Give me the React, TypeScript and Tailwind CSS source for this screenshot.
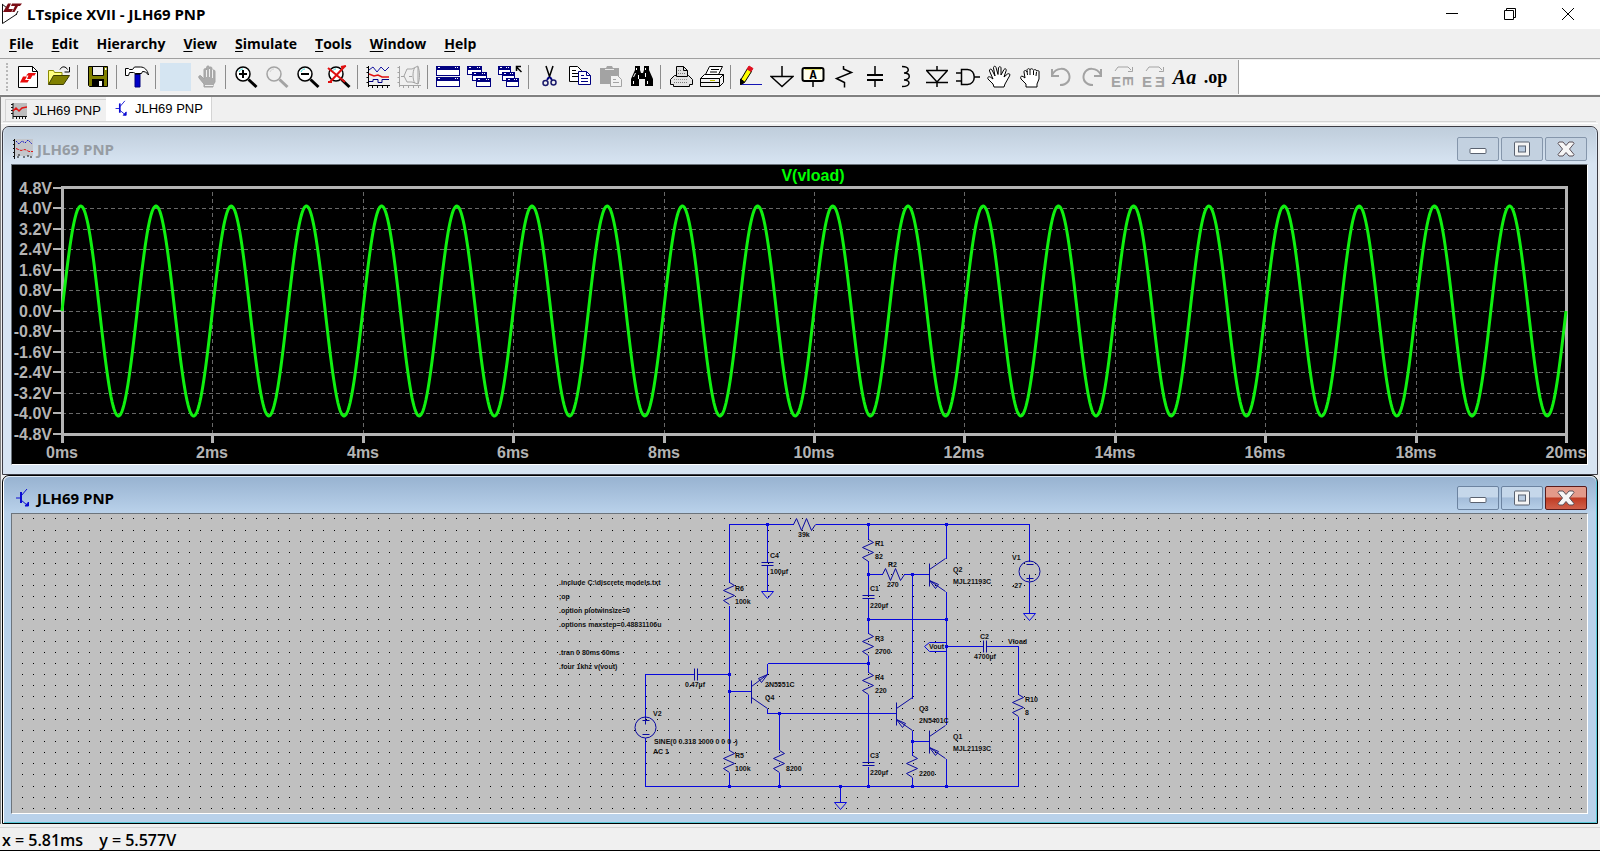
import React from 'react';

const BLUE = '#0808dc';
const GREY = '#a3a3a3';
const AXIS = '#b4b4b4';

/* ---------- toolbar icons, all on a 24x24 grid ---------- */

const Icon: React.FC<{ children: React.ReactNode }> = ({ children }) => (
  <svg width="24" height="24" viewBox="0 0 24 24" fill="none" stroke="#000" aria-hidden="true">
    {children}
  </svg>
);

const NewIcon = () => (
  <Icon>
    <path d="M2.500 1.500h14l5 5v16h-19z" fill="#fff" />
    <path d="M16.500 1.500v5h5" />
    <path d="M4 17.500l3-6h4l-2 3.500h4l-1.500 2.500zM11 14l1.500-3.500H10L12.500 8H20l-1.500 2.500h-2L14.500 14z" fill="#e80c0c" stroke="none" />
  </Icon>
);

const OpenIcon = () => (
  <Icon>
    <path d="M1.500 19V5.500h5l1 2h7.500v4" fill="#ffff80" stroke="#8a8a00" />
    <path d="M1.500 19.500l5-9h16l-6 9z" fill="#808000" stroke="#3c3c00" />
    <path d="M13 4.500c2-4 6-3 7.500 0M22.500 2v5h-5" stroke="#000" />
  </Icon>
);

const SaveIcon = () => (
  <Icon>
    <path d="M2.500 1.500h19v20h-18l-1-1z" fill="#808000" />
    <path d="M6.500 1.500h11v9h-11z" fill="#f0f0f0" />
    <path d="M6 14h12v8H6z" fill="#000" stroke="none" />
    <path d="M13 16h3v5h-3z" fill="#fff" stroke="none" />
    <path d="M19 3h1.500v2H19z" fill="#fff" stroke="none" />
  </Icon>
);

const HammerIcon = () => (
  <Icon>
    <path d="M10 9h5v13h-5z" fill="#0000c8" stroke="#00007c" />
    <path d="M.5 3.500h3l1 1h3l2-2.500h6c4 0 7 3 8 8-2-3-4-3.500-6-3.500l-1 2h-6l-2-1h-4l-1 3h-3z" fill="#fff" />
    <path d="M10 9h5" stroke="#000" />
  </Icon>
);

const StopHandIcon = () => (
  <Icon>
    <path
      d="M9 22v-3l-5-6c-1-2 1-3 2-2l3 3V5c0-2 2.500-2 2.500 0v6V2.500c0-2 3-2 3 0V11V3.500c0-2 2.500-2 2.500 0V12V6.500c0-2 3-2 3 0V17l-2 3v2z"
      fill="#ababab"
      stroke={GREY}
    />
    <path d="M11.500 5v7M14.500 4v8M17.500 5v8M10 20.500h8" stroke="#efefef" />
  </Icon>
);

const Magnifier: React.FC<{ grey?: boolean; children?: React.ReactNode }> = ({ grey, children }) => (
  <Icon>
    <circle cx="9" cy="9" r="7" fill={grey ? '#f0f0f0' : '#fff'} stroke={grey ? GREY : '#000'} strokeWidth="1.500" />
    <path d="M5 7c1-2 2-3 4-3" stroke={grey ? '#d0d0d0' : '#40d8d8'} />
    <path d="M14.500 14.500l8 7.500" stroke={grey ? GREY : '#000'} strokeWidth="3" />
    {children}
  </Icon>
);

const ZoomInIcon = () => (
  <Magnifier>
    <path d="M9 5v8M5 9h8" strokeWidth="2" />
  </Magnifier>
);

const ZoomAreaIcon = () => <Magnifier grey />;

const ZoomOutIcon = () => (
  <Magnifier>
    <path d="M5 9h8" strokeWidth="2" />
  </Magnifier>
);

const ZoomFitIcon = () => (
  <Magnifier>
    <path d="M1 3l17 14M18 1L3 17M1 17h4M14 2l5-1" stroke="#e01010" strokeWidth="2" />
  </Magnifier>
);

const PlotIcon = () => (
  <Icon>
    <path d="M2.500 1v21M.5 2.500h2M.5 7.500h2M.5 12.500h2M.5 17.500h2M2 20.500h22M6.500 20v3M11.500 20v3M16.500 20v3M21.500 20v3" />
    <path d="M3 5l4-3 4 5 4-5 4 4 4-4" stroke="#1414a0" />
    <path d="M3 9l5 2 4-1 4 2h7" stroke="#e01010" strokeWidth="1.500" />
    <path d="M3 16.500h4v-2h5v3h4v-3h7" stroke="#000080" />
  </Icon>
);

const GreyPlotIcon = () => (
  <Icon>
    <g stroke={GREY}>
      <path d="M2.500 1v21M.5 2.500h2M.5 7.500h2M.5 12.500h2M.5 17.500h2M2 20.500h22M6.500 20v3M11.500 20v3M16.500 20v3M21.500 20v3" />
      <path d="M7 11l3-7h5l6-3v18l-6-2h-5z" />
      <path d="M17.500 3c-2 4-2 10 0 15M21 2c2 4 2 12 0 17" />
      <path d="M4 11.500h3M12 11.500h3" />
    </g>
  </Icon>
);

const TileIcon = () => (
  <Icon>
    <g shapeRendering="crispEdges" stroke="#000080">
      <path d="M.5 1.500h23v9H.5zM.5 12.500h23v9H.5z" fill="#fff" />
      <path d="M.5 3h23M.5 14h23" strokeWidth="4" />
      <path d="M2 2.500h2M19 2.500h1M21 2.500h1M2 13.500h2M19 13.500h1M21 13.500h1" stroke="#fff" />
    </g>
  </Icon>
);

const MiniWindow: React.FC<{ x: number; y: number; w: number }> = ({ x, y, w }) => (
  <g shapeRendering="crispEdges">
    <rect x={x + 0.5} y={y + 0.5} width={w} height="8" fill="#fff" stroke="#000080" />
    <rect x={x} y={y} width={w + 1} height="4" fill="#000080" stroke="none" />
    <path d={`M${x + 2} ${y + 1.5}h2M${x + w - 4} ${y + 1.5}h1M${x + w - 2} ${y + 1.5}h1`} stroke="#fff" />
  </g>
);

const CascadeIcon = () => (
  <Icon>
    <MiniWindow x={0} y={1} w={14} />
    <MiniWindow x={5} y={7} w={14} />
    <MiniWindow x={9} y={13} w={14} />
  </Icon>
);

const CloseAllIcon = () => (
  <Icon>
    <MiniWindow x={0} y={1} w={12} />
    <MiniWindow x={4} y={7} w={12} />
    <MiniWindow x={8} y={13} w={12} />
    <path d="M23.500 7l-5-5M18.500 6V1.500H23" strokeWidth="1.500" />
  </Icon>
);

const CutIcon = () => (
  <Icon>
    <path d="M9 1l4 12M16 1l-4 12" strokeWidth="1.500" />
    <path d="M12 12l-2 3M13 12l2 3" stroke="#000080" strokeWidth="2" />
    <circle cx="8.500" cy="18" r="2.500" stroke="#1a1a6c" strokeWidth="1.500" />
    <circle cx="16.500" cy="17.500" r="2.500" stroke="#1a1a6c" strokeWidth="1.500" />
  </Icon>
);

const CopyIcon = () => (
  <Icon>
    <path d="M1.500 1.500h8l4 4v11h-12z" fill="#fff" />
    <path d="M4 5.500h4M4 8.500h6M4 11.500h6" />
    <path d="M10.500 6.500h8l4 4v9h-12z" fill="#fff" stroke="#000080" />
    <path d="M18.500 6.500v4h4M13 10.500h3M13 13.500h7M13 16.500h7" stroke="#000080" />
  </Icon>
);

const PasteIcon = () => (
  <Icon>
    <path d="M1 3h6l1-2h5l1 2h6v16H1z" fill={GREY} stroke="none" />
    <path d="M6 4.500h9" stroke="#e8e8e8" />
    <path d="M11.500 10.500h7l4 4v7h-11z" fill="#f2f2f2" stroke={GREY} />
    <path d="M14 14.500h3M14 17.500h6" stroke={GREY} />
  </Icon>
);

const FindIcon = () => (
  <Icon>
    <path d="M5 1h5v4l1 3h2l1-3V1h5v4l4 9v7h-8v-7h-6v7H1v-7l4-9z" fill="#000" stroke="none" />
    <path d="M6.500 3v2M15.500 3v2M5.500 8l-2 4M15.500 8v4M8.500 10v4M3.500 16v3M17.500 16v3" stroke="#fff" />
  </Icon>
);

const PreviewIcon = () => (
  <Icon>
    <path d="M1.500 14.500l4-4h14l4 4v5h-3v2h-16v-2h-3z" fill="#e4e4e4" />
    <path d="M7.500 11.500v-10h7l4 4v6z" fill="#dedede" />
    <path d="M14.500 1.500v4h4" />
    <path d="M5 17.500h14M9 5.500h4M9 8.500h7" stroke="#777" strokeDasharray="1 1" />
    <path d="M5 14.500h14" stroke="#999" strokeDasharray="1 1" />
  </Icon>
);

const PrintIcon = () => (
  <Icon>
    <path d="M5.500 9.500l4-8h13l-4 8z" fill="#fff" />
    <path d="M11 4.500h8M10 7h7" />
    <path d="M.5 13.500l4-4h19l-4 4z" fill="#fff" />
    <path d="M.5 13.500h19v8H.5zM19.500 13.500l4-4v8l-4 4" fill="#f2f2f2" />
    <path d="M1 17.500h18" />
    <path d="M10 15.500h5" stroke="#c8c800" />
  </Icon>
);

const WireIcon = () => (
  <Icon>
    <path d="M2 19.500h21" stroke="#1414b4" />
    <path d="M8.500 3.500l4 3-7 11-4 2 .5-5z" fill="#ffff00" />
    <path d="M8 4l2-3 4 2.500-2 3z" fill="#e01020" stroke="#e01020" />
    <path d="M1.500 14l4 3-4 2.500z" fill="#000" />
  </Icon>
);

const GroundIcon = () => (
  <Icon>
    <path d="M12 1v10.500M1 11.500h22l-11 10z" strokeWidth="1.500" />
  </Icon>
);

const LabelIcon = () => (
  <Icon>
    <path d="M12 16v6" strokeWidth="1.500" />
    <rect x="1.500" y="3" width="21" height="13" rx="2" fill="#fffff0" strokeWidth="2" />
    <path d="M4 4.500h16" stroke="#dede60" />
    <text x="12" y="14" textAnchor="middle" fontSize="12" fontWeight="bold" fill="#000" stroke="none" fontFamily="Liberation Mono, monospace">A</text>
  </Icon>
);

const ResistorIcon = () => (
  <Icon>
    <path d="M11.500 1v3l8 3.500-15 6 8 4v5" strokeWidth="1.500" />
  </Icon>
);

const CapacitorIcon = () => (
  <Icon>
    <path d="M12 1v8M12 15v7" strokeWidth="1.500" />
    <path d="M4 10h16M4 15h16" strokeWidth="2" />
  </Icon>
);

const InductorIcon = () => (
  <Icon>
    <path d="M8 1.500c8 0 8 6 2 6.500 7 0 7 6.500 0 7 7 0 7 6.500-2 6.500" strokeWidth="1.500" />
  </Icon>
);

const DiodeIcon = () => (
  <Icon>
    <path d="M12 1v4M12 17v5M1 5.500h22M1 17.500h22M2 6l10 11L22 6" strokeWidth="1.500" />
  </Icon>
);

const GateIcon = () => (
  <Icon>
    <path d="M5.500 4.500h6c9 0 9 15 0 15h-6zM0 8h6M0 16h6M18.500 12H24" strokeWidth="1.500" />
  </Icon>
);

const MoveIcon = () => (
  <Icon>
    <path
      d="M7 22l-1-3-5-5c-1-2 1-3 3-1.500l2 1.500L2.500 6c-.5-2 1.500-2.500 2.500-1l3 6L6.500 3c0-2 2-2.500 2.500-.5l2 7 .5-6.500c.5-2 2.500-1.500 2.500 0v7l3-5.500c1-1.500 3-.5 2 1.500l-2 6 3.500-3c2-1 3 .5 2 2L18 19l-1 3z"
      fill="#fff"
    />
  </Icon>
);

const DragIcon = () => (
  <Icon>
    <path
      d="M8 22v-3l-5-5c-1-2 0-3.500 2-2.500l2 1.500-1-6c0-2 2-2 3 0V5c.5-2 3-1.500 3 0 .5-2 3-1.500 3.500.5 1-1.500 3-1 3 .5 2-1 3 0 2.500 2v6l-2 5v3z"
      fill="#fff"
    />
    <path d="M9 6l.5 4M12 5v5M15.500 6v4M18.500 7l-.5 4" />
  </Icon>
);

const UndoIcon = () => (
  <Icon>
    <path d="M3 4v7h7M3 10c4-8 14-8 17-1 2 6-2 11-9 11" stroke={GREY} strokeWidth="2" />
  </Icon>
);

const RedoIcon = () => (
  <Icon>
    <path d="M21 4v7h-7M21 10c-4-8-14-8-17-1-2 6 2 11 9 11" stroke={GREY} strokeWidth="2" />
  </Icon>
);

const RotateIcon = () => (
  <Icon>
    <path d="M4 6l3-4h10l3 3M21.500 2v4.500H17" stroke={GREY} />
    <g fill={GREY} stroke="none" fontSize="15" fontWeight="bold" fontFamily="Liberation Sans, sans-serif">
      <text x="0" y="22">E</text>
      <text x="0" y="0" transform="translate(12 11) rotate(90)">E</text>
    </g>
  </Icon>
);

const MirrorIcon = () => (
  <Icon>
    <path d="M4 6l3-4h10l3 3M21.500 2v4.500H17" stroke={GREY} />
    <g fill={GREY} stroke="none" fontSize="15" fontWeight="bold" fontFamily="Liberation Sans, DejaVu Sans, sans-serif">
      <text x="0" y="22">E</text>
      <text x="13" y="22">Ǝ</text>
    </g>
  </Icon>
);

const TextIcon = () => (
  <span className="font-['Liberation_Serif',serif] text-[20px] leading-6 font-bold italic">Aa</span>
);

const OpIcon = () => (
  <span className="pb-px font-['Liberation_Serif',serif] text-[18px] leading-5 font-bold">.op</span>
);

interface Tool {
  label: string;
  icon: React.FC;
}

const toolGroups: Tool[][] = [
  [
    { label: 'New Schematic', icon: NewIcon },
    { label: 'Open', icon: OpenIcon },
  ],
  [{ label: 'Save', icon: SaveIcon }],
  [{ label: 'Control Panel', icon: HammerIcon }],
  [
    { label: 'Run', icon: () => <span className="h-7 w-[31px] bg-[#d5e5f2]" /> },
    { label: 'Halt', icon: StopHandIcon },
  ],
  [
    { label: 'Zoom in', icon: ZoomInIcon },
    { label: 'Zoom area', icon: ZoomAreaIcon },
    { label: 'Zoom out', icon: ZoomOutIcon },
    { label: 'Zoom full extents', icon: ZoomFitIcon },
  ],
  [
    { label: 'Autorange', icon: PlotIcon },
    { label: 'Plot settings', icon: GreyPlotIcon },
  ],
  [
    { label: 'Tile windows', icon: TileIcon },
    { label: 'Cascade windows', icon: CascadeIcon },
    { label: 'Close all', icon: CloseAllIcon },
  ],
  [
    { label: 'Cut', icon: CutIcon },
    { label: 'Copy', icon: CopyIcon },
    { label: 'Paste', icon: PasteIcon },
    { label: 'Find', icon: FindIcon },
  ],
  [
    { label: 'Print setup', icon: PreviewIcon },
    { label: 'Print', icon: PrintIcon },
  ],
  [
    { label: 'Wire', icon: WireIcon },
    { label: 'Ground', icon: GroundIcon },
    { label: 'Label net', icon: LabelIcon },
    { label: 'Resistor', icon: ResistorIcon },
    { label: 'Capacitor', icon: CapacitorIcon },
    { label: 'Inductor', icon: InductorIcon },
    { label: 'Diode', icon: DiodeIcon },
    { label: 'Component', icon: GateIcon },
    { label: 'Move', icon: MoveIcon },
    { label: 'Drag', icon: DragIcon },
    { label: 'Undo', icon: UndoIcon },
    { label: 'Redo', icon: RedoIcon },
    { label: 'Rotate', icon: RotateIcon },
    { label: 'Mirror', icon: MirrorIcon },
    { label: 'Text', icon: TextIcon },
    { label: 'SPICE directive', icon: OpIcon },
  ],
];

const Toolbar = () => (
  <div className="flex h-[35px] border-b border-[#f8f8f8] bg-white">
    <div className="flex items-center border-r border-[#a0a0a0] bg-[#f0f0f0] pr-[7px] pl-1">
      <div className="mr-1 h-7 w-1 border-r-2 border-dotted border-[#b8b8b8]" />
      {toolGroups.map((group, i) => (
        <React.Fragment key={i}>
          {i > 0 && <div className="mx-[3px] h-6 w-[2px] border-l border-[#8c8c8c]" />}
          {group.map(({ label, icon: Glyph }) => (
            <button key={label} type="button" aria-label={label} className="flex h-7 w-[31px] items-center justify-center">
              <Glyph />
            </button>
          ))}
        </React.Fragment>
      ))}
    </div>
  </div>
);

/* ---------- title bar and menu ---------- */

const AppLogo = () => (
  <svg width="22" height="22" viewBox="0 0 22 22" fill="none" aria-hidden="true">
    <path d="M1.500 1v19.500L16 11" stroke="#111" />
    <path d="M1 1l5 4M15 12l2-4" stroke="#111" />
    <path d="M7 .5h3L7.500 6H12l-1.500 3H2z" fill="#7a0c14" />
    <path d="M11 .5h10L19 3h-2l-3.500 6H11l3-6h-4z" fill="#7a0c14" />
  </svg>
);

const TitleBar = () => (
  <header className="flex h-[29px] items-center bg-white pb-[2px] pl-[1px]">
    <AppLogo />
    <h1 className="ml-1 flex-1 text-[15px] leading-5 font-bold text-black">LTspice XVII - JLH69 PNP</h1>
    <button type="button" aria-label="Minimize" className="flex w-[58px] justify-center">
      <svg width="12" height="12" viewBox="0 0 12 12" stroke="#000"><path d="M0 5.500h12" /></svg>
    </button>
    <button type="button" aria-label="Restore" className="flex w-[58px] justify-center">
      <svg width="12" height="12" viewBox="0 0 12 12" stroke="#000" fill="none">
        <path d="M.5 2.500h9v9h-9zM2.500 2.500v-2h9v9h-2" />
      </svg>
    </button>
    <button type="button" aria-label="Close" className="mr-[3px] flex w-[58px] justify-center">
      <svg width="12" height="12" viewBox="0 0 12 12" stroke="#000"><path d="M0 0l12 12M12 0L0 12" /></svg>
    </button>
  </header>
);

// [before, mnemonic, after]
const menus = [
  ['', 'F', 'ile'],
  ['', 'E', 'dit'],
  ['H', 'i', 'erarchy'],
  ['', 'V', 'iew'],
  ['', 'S', 'imulate'],
  ['', 'T', 'ools'],
  ['', 'W', 'indow'],
  ['', 'H', 'elp'],
];

const MenuBar = () => (
  <nav className="flex h-[30px] items-center border-b border-[#a0a0a0] bg-[#f0f0f0] pt-px">
    {menus.map(([before, key, after]) => (
      <button key={key + after} type="button" className="px-[9px] text-[14px] leading-5 font-bold text-black">
        {before}
        <span className="underline underline-offset-2">{key}</span>
        {after}
      </button>
    ))}
  </nav>
);

/* ---------- document tabs ---------- */

const PlotGlyph: React.FC<{ size: number }> = ({ size }) => (
  <svg width={size} height={size} viewBox="0 0 16 16" fill="none" aria-hidden="true">
    <path d="M2 0h14v13H2z" fill="#bdbdbd" />
    <path d="M2 0v16M0 1.500h2M0 4.500h2M0 7.500h2M0 10.500h2M2 13.500h14M5.500 13v3M8.500 13v3M11.500 13v3M14.500 13v3" stroke="#111" />
    <path d="M2 8l3-3 3 3 3-3 5-1" stroke="#e01414" strokeWidth="1.500" />
  </svg>
);

const WaveGlyph = () => (
  <svg width="20" height="20" viewBox="0 0 20 20" fill="none" aria-hidden="true">
    <path d="M2 0h18v17H2z" fill="#c3c6cb" />
    <path d="M1.500 0v20M0 1.500h2M0 5.500h2M0 9.500h2M0 13.500h2M0 17.500h2" stroke="#111" />
    <path d="M3 2l3 3 3-3 3 2 3-3 4 4" stroke="#1414c8" strokeDasharray="2 1" />
    <path d="M3 9.500l5 2 4-1 4 2h4" stroke="#e01414" strokeDasharray="3 1" />
    <path d="M5 19v-3h3M11 19v-2M14 17h3M18 19v-3" stroke="#111" strokeDasharray="2 1" />
  </svg>
);

const TransistorGlyph: React.FC<{ size: number }> = ({ size }) => (
  <svg width={size} height={size} viewBox="0 0 18 20" fill="none" stroke="#0a0ad2" aria-hidden="true">
    <path d="M2 10h5M7 8l6-7M7 12l6 5" />
    <path d="M7 4v11" strokeWidth="2" />
    <path d="M11 18h3.500v-4z" fill="#0a0ad2" />
  </svg>
);

const TabStrip = () => (
  <div role="tablist" className="mx-[2px] flex h-[25px] items-end border-b border-[#d4d4d4] pl-[2px] font-['Liberation_Sans',Arial,sans-serif] text-[13px] leading-4 text-black">
    <button type="button" role="tab" aria-selected="false" className="flex h-[22px] w-[101px] items-center gap-[6px] border-t border-l border-[#d4d4d4] pl-[5px] whitespace-nowrap">
      <PlotGlyph size={16} />
      JLH69 PNP
    </button>
    <button type="button" role="tab" aria-selected="true" className="flex h-6 w-[106px] items-center gap-[5px] border-r border-[#d4d4d4] bg-white pb-px pl-[7px] whitespace-nowrap">
      <TransistorGlyph size={17} />
      JLH69 PNP
    </button>
  </div>
);

/* ---------- child windows ---------- */

const captionButton = 'flex h-6 w-[42px] items-center justify-center rounded-[2px] border';

interface ChildWindowProps {
  title: string;
  active?: boolean;
  icon: React.ReactNode;
  children: React.ReactNode;
}

const ChildWindow: React.FC<ChildWindowProps> = ({ title, active, icon, children }) => {
  const button = active
    ? 'border-[#6c83a0] bg-linear-to-b from-[#c5d7ea] from-45% via-[#a3bcd9] via-50% to-[#b7cfe8]'
    : 'border-[#8596ab] bg-[#c3d1e0]';
  const close = active
    ? 'border-[#5a1a1a] bg-linear-to-b from-[#e39a8a] from-45% via-[#c03a22] via-50% to-[#d0604a]'
    : button;

  return (
    <section
      className={`rounded-t-[7px] border pr-[9px] pb-[9px] pl-2 ${
        active
          ? 'border-black bg-[#b9d1ea] shadow-[inset_1px_1px_0_#fff,inset_-1px_-1px_0_#5ac8d8]'
          : 'border-[#3c3c44] bg-[#d7e4f2]'
      }`}
    >
      <div
        className={`-mr-2 -ml-[7px] flex h-[37px] items-center rounded-t-[6px] bg-linear-to-b pr-[9px] pb-[2px] pl-[9px] ${
          active ? 'border-t border-[#dfeaf6] from-[#98b3d1] to-[#b9d1ea] pt-[7px]' : 'from-[#bfcddb] to-[#d7e4f2] pt-[9px]'
        }`}
      >
        {icon}
        <h2 className={`ml-[4px] flex-1 text-[15px] leading-5 font-bold ${active ? 'text-black' : 'text-[#969ca3]'}`}>
          {title}
        </h2>
        <div className="flex gap-[2px]">
          <button type="button" aria-label="Minimize" className={`${captionButton} ${button}`}>
            <svg width="18" height="16" viewBox="0 0 18 16">
              <rect x="1" y="7.500" width="16" height="5" rx="1" fill="#fff" stroke="#5a6270" />
            </svg>
          </button>
          <button type="button" aria-label="Maximize" className={`${captionButton} ${button}`}>
            <svg width="18" height="16" viewBox="0 0 18 16" stroke="#5a6270">
              <rect x="1.500" y="1" width="15" height="14" rx="1" fill="#f4f4f4" />
              <rect x="5.500" y="5" width="7" height="6" fill="#b9cbe0" />
            </svg>
          </button>
          <button type="button" aria-label="Close" className={`${captionButton} ${close}`}>
            <svg width="18" height="16" viewBox="0 0 18 16">
              <path d="M2 1h4l3 3.500L12 1h4l1 1.500L12.500 8l4.500 5.500-1 1.500h-4l-3-3.500L6 15H2l-1-1.500L5.500 8 1 2.500z" fill="#f6f6f6" stroke="#5a5058" />
            </svg>
          </button>
        </div>
      </div>
      <div className="border border-t-[#6c747c] border-r-white border-b-white border-l-[#6c747c]">{children}</div>
    </section>
  );
};

/* ---------- waveform ---------- */

const PLOT = { left: 50, right: 1554, top: 23, bottom: 269 };
const voltLabels = ['4.8V', '4.0V', '3.2V', '2.4V', '1.6V', '0.8V', '0.0V', '-0.8V', '-1.6V', '-2.4V', '-3.2V', '-4.0V', '-4.8V'];
const timeLabels = ['0ms', '2ms', '4ms', '6ms', '8ms', '10ms', '12ms', '14ms', '16ms', '18ms', '20ms'];

const sinePoints = Array.from({ length: PLOT.right - PLOT.left + 1 }, (_, i) => {
  const t = (i / (PLOT.right - PLOT.left)) * 20;
  return `${PLOT.left + i},${(146 - 105 * Math.sin(2 * Math.PI * t)).toFixed(1)}`;
}).join(' ');

const Waveform = () => {
  const { left, right, top, bottom } = PLOT;
  const yOf = (i: number) => Math.floor(top + ((bottom - top) * i) / 12) + 0.5;
  const xOf = (i: number) => Math.round(left + ((right - left) * i) / 10) + 0.5;

  return (
    <svg
      viewBox="0 0 1575 299"
      className="block h-auto w-full bg-black font-['Liberation_Sans',Arial,sans-serif] text-[16px] font-bold"
      role="img"
      aria-label="V(vload) over time"
    >
      <text x="801" y="16" textAnchor="middle" fill="#00ff00">V(vload)</text>
      <g stroke="#686868" strokeDasharray="4 3" shapeRendering="crispEdges">
        {voltLabels.slice(1, -1).map((v, i) => (
          <line key={v} x1={left} x2={right} y1={yOf(i + 1)} y2={yOf(i + 1)} />
        ))}
        {timeLabels.slice(1, -1).map((t, i) => (
          <line key={t} x1={xOf(i + 1)} x2={xOf(i + 1)} y1={top + 4} y2={bottom} />
        ))}
      </g>
      <rect x={left + 0.5} y={top - 0.5} width={right - left} height={bottom - top + 1} fill="none" stroke={AXIS} strokeWidth="3" />
      <g fill={AXIS}>
        {voltLabels.map((v, i) => (
          <React.Fragment key={v}>
            <rect x={left - 9} y={yOf(i) - 1.5} width="9" height="2" />
            <text x="40" y={yOf(i) + 5} textAnchor="end">{v}</text>
          </React.Fragment>
        ))}
        {timeLabels.map((t, i) => (
          <React.Fragment key={t}>
            <rect x={xOf(i) - 1.5} y={bottom} width="3" height="9" />
            <text x={xOf(i) - 0.5} y="293" textAnchor="middle">{t}</text>
          </React.Fragment>
        ))}
      </g>
      <polyline points={sinePoints} fill="none" stroke="#10f010" strokeWidth="3" strokeLinejoin="round" />
    </svg>
  );
};

/* ---------- schematic ---------- */

const gridDots = Array.from({ length: 27 }, (_, row) => {
  const y = 4 + Math.floor(row * 11.13 + 0.88);
  return Array.from({ length: 141 }, (_, col) => `M${10 + Math.round(col * 11.136)} ${y}.5h1`).join('');
}).join('');

const wires = [
  'M718 68V10H782M804 10H1018V47M718 91V236',
  'M756 10V48M756 51V77',
  'M857 10V25M857 46V81M857 84V119M857 141V158M857 180V248M857 252V272',
  'M857 60H871M892 60H917M857 105H935M756 149H857',
  'M901 60V184M935 10V44M935 77V210M935 244V272',
  'M935 132H972M975 132H1007V180M1007 202V272',
  'M1018 67V99',
  'M634 203V160H683M686 160H718M634 223V272H1007',
  'M718 177H740M756 149V160M756 194V199H885',
  'M768 199V235M768 258V272M718 258V272',
  'M901 216V241M901 263V272M901 227H918',
  'M829 272V288',
];

const nodes = [
  [756, 10], [857, 10], [935, 10], [857, 60], [901, 60], [857, 105], [935, 105], [935, 132], [857, 149],
  [718, 160], [718, 177], [768, 199], [901, 227], [718, 272], [768, 272], [829, 272], [857, 272], [901, 272], [935, 272],
];

const verticalResistors = [[718, 68], [857, 25], [857, 119], [857, 158], [1007, 180], [718, 236], [768, 236], [901, 241]];
const horizontalResistors = [[782, 10], [871, 60]];
const verticalCaps = [[756, 48], [857, 81], [857, 248]];
const horizontalCaps = [[683, 160], [972, 132]];
const pnps = [[918, 60], [885, 199], [918, 227]];
const grounds = [[756, 77], [1018, 99], [829, 288]];

const partLabels: [number, number, string][] = [
  [547, 71, '.include C:\\discrete models.txt'],
  [547, 85, ';op'],
  [547, 99, '.option plotwinsize=0'],
  [547, 113, '.options maxstep=0.48831106u'],
  [547, 141, '.tran 0 80ms 60ms'],
  [547, 155, '.four 1khz v(vout)'],
  [786, 23, '39k'],
  [758, 44, 'C4'], [758, 60, '100µf'],
  [723, 77, 'R6'], [723, 90, '100k'],
  [863, 32, 'R1'], [863, 45, '82'],
  [876, 53, 'R2'], [875, 73, '270'],
  [858, 77, 'C1'], [858, 94, '220µf'],
  [863, 127, 'R3'], [863, 140, '2700'],
  [941, 58, 'Q2'], [941, 70, 'MJL21193C'],
  [1000, 46, 'V1'], [1000, 74, '-27'],
  [968, 125, 'C2'], [962, 145, '4700µf'],
  [996, 130, 'Vload'], [917, 135, 'Vout'],
  [863, 166, 'R4'], [863, 179, '220'],
  [907, 197, 'Q3'], [907, 209, '2N5401C'],
  [941, 225, 'Q1'], [941, 237, 'MJL21193C'],
  [858, 244, 'C3'], [858, 261, '220µf'],
  [907, 262, '2200'],
  [1013, 188, 'R10'], [1013, 201, '8'],
  [673, 173, '0.47µf'],
  [641, 202, 'V2'], [642, 230, 'SINE(0 0.318 1000 0 0 0 -)'], [641, 240, 'AC 1'],
  [753, 173, '2N5551C'], [753, 186, 'Q4'],
  [723, 244, 'R5'], [723, 257, '100k'],
  [774, 257, '8200'],
];

const Schematic = () => (
  <svg
    viewBox="0 0 1575 299"
    className="block h-auto w-full bg-[#c0c0c0] font-['Liberation_Sans',Arial,sans-serif] text-[7px] font-bold"
    role="img"
    aria-label="JLH69 PNP schematic"
  >
    <path d={gridDots} stroke="#000" shapeRendering="crispEdges" />
    <g transform="translate(-0.5 0.5)" fill="none" stroke={BLUE}>
      <path d={wires.join('')} shapeRendering="crispEdges" />
      {nodes.map(([x, y]) => (
        <rect key={`${x}-${y}`} x={x - 1} y={y - 1} width="2" height="2" fill={BLUE} shapeRendering="crispEdges" />
      ))}
      {grounds.map(([x, y]) => (
        <path key={x} d={`M${x - 6} ${y}h12l-6 7z`} />
      ))}
      <path d="M935 128h-17l-5 4 5 5h17" />
      <g stroke="#0808a0">
        {verticalResistors.map(([x, y]) => (
          <path key={`${x}-${y}`} d={`M${x} ${y}l5 3-11 5 11 5-11 5 6 4`} />
        ))}
        {horizontalResistors.map(([x, y]) => (
          <path key={x} d={`M${x} ${y}l3-6 5 12 5-12 5 12 4-6`} />
        ))}
        {verticalCaps.map(([x, y]) => (
          <path key={y} d={`M${x - 6} ${y}h12M${x - 6} ${y + 3}h12`} />
        ))}
        {horizontalCaps.map(([x, y]) => (
          <path key={x} d={`M${x} ${y - 6}v12M${x + 3} ${y - 6}v12`} />
        ))}
        {pnps.map(([x, y]) => (
          <path key={`${x}-${y}`} d={`M${x} ${y - 11}v23M${x} ${y - 5}l16-11M${x} ${y + 6}l16 11M${x} ${y + 6}l9 4-3 4z`} />
        ))}
        <path d="M740 166v23M740 172l16-12M740 183l16 11M756 160l-9 4 3 4z" />
        <circle cx="634" cy="213" r="10.500" />
        <path d="M631 206h7M634 203v7M631 220h7" />
        <circle cx="1018" cy="57" r="10.500" />
        <path d="M1015 50h7M1015 64h7M1018 60v7" />
      </g>
    </g>
    <g fill="#101010">
      {partLabels.map(([x, y, label]) => (
        <text key={`${x}-${y}`} x={x} y={y}>{label}</text>
      ))}
    </g>
  </svg>
);

const StatusBar = () => (
  <footer className="flex h-[23px] items-center gap-4 border-b border-black bg-[#f0f0f0] pt-[2px] pl-[2px] text-[16px] leading-5 font-semibold text-black">
    <span>x = 5.81ms</span>
    <span>y = 5.577V</span>
  </footer>
);

const App: React.FC = () => (
  <div className="flex min-h-screen flex-col bg-[#f0f0f0] font-['Open_Sans','Noto_Sans',sans-serif]">
    <TitleBar />
    <MenuBar />
    <div className="pt-px">
      <Toolbar />
    </div>
    <main className="border-t-2 border-l border-t-[#808080] border-l-[#808080] pr-[2px]">
      <TabStrip />
      <div className="mt-[1px] border-t border-white pt-[2px] pl-px">
        <ChildWindow title="JLH69 PNP" icon={<WaveGlyph />}>
          <Waveform />
        </ChildWindow>
        <ChildWindow title="JLH69 PNP" active icon={<TransistorGlyph size={20} />}>
          <Schematic />
        </ChildWindow>
      </div>
    </main>
    <div className="mt-auto border-t border-[#d4d4d4]">
      <StatusBar />
    </div>
  </div>
);

export default App;
